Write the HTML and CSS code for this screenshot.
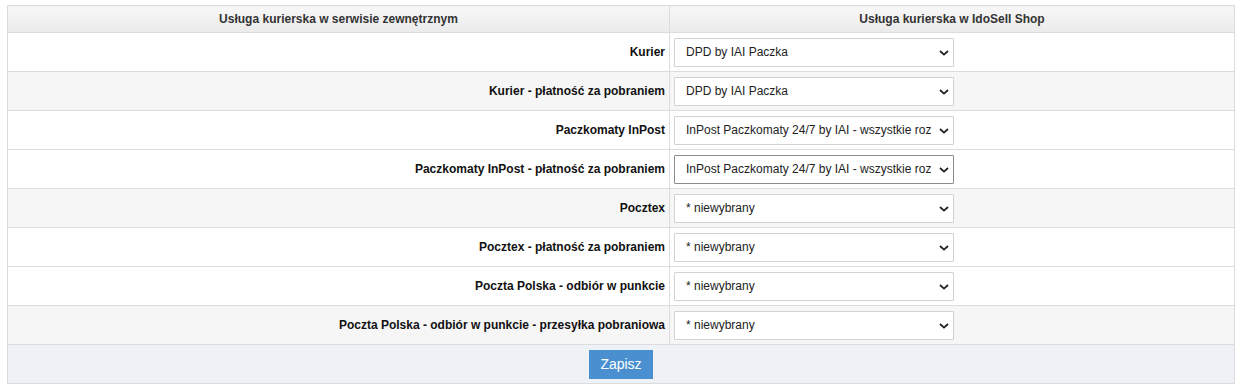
FILE: index.html
```html
<!DOCTYPE html>
<html lang="pl">
<head>
    <meta charset="UTF-8">
    <meta name="viewport" content="width=device-width, initial-scale=1.0">
    <title>Usługi kurierskie</title>
  <link rel="stylesheet" href="styles.css">
</head>
<body>
    <div class="page">
        <form action="/" class="mapping-form">
            <table class="mapping">
                <thead>
                    <tr>
                        <th class="col-ext">Usługa kurierska w serwisie zewnętrznym</th>
                        <th>Usługa kurierska w IdoSell Shop</th>
                    </tr>
                </thead>
                <tbody>
                    <tr>
                        <td class="label">Kurier</td>
                        <td><span class="select-wrap"><select class="input"><option>DPD by IAI Paczka</option></select><svg class="chevron" width="10" height="6" viewBox="0 0 10 6"><path d="M1 1l4 3.6L9 1" fill="none" stroke="#222" stroke-width="1.8"/></svg></span></td>
                    </tr>
                    <tr class="shaded">
                        <td class="label">Kurier - płatność za pobraniem</td>
                        <td><span class="select-wrap"><select class="input"><option>DPD by IAI Paczka</option></select><svg class="chevron" width="10" height="6" viewBox="0 0 10 6"><path d="M1 1l4 3.6L9 1" fill="none" stroke="#222" stroke-width="1.8"/></svg></span></td>
                    </tr>
                    <tr>
                        <td class="label">Paczkomaty InPost</td>
                        <td><span class="select-wrap"><select class="input"><option>InPost Paczkomaty 24/7 by IAI - wszystkie rozmiary</option></select><svg class="chevron" width="10" height="6" viewBox="0 0 10 6"><path d="M1 1l4 3.6L9 1" fill="none" stroke="#222" stroke-width="1.8"/></svg></span></td>
                    </tr>
                    <tr>
                        <td class="label">Paczkomaty InPost - płatność za pobraniem</td>
                        <td><span class="select-wrap"><select class="input input-hover"><option>InPost Paczkomaty 24/7 by IAI - wszystkie rozmiary</option></select><svg class="chevron" width="10" height="6" viewBox="0 0 10 6"><path d="M1 1l4 3.6L9 1" fill="none" stroke="#222" stroke-width="1.8"/></svg></span></td>
                    </tr>
                    <tr class="shaded">
                        <td class="label">Pocztex</td>
                        <td><span class="select-wrap"><select class="input"><option>* niewybrany</option></select><svg class="chevron" width="10" height="6" viewBox="0 0 10 6"><path d="M1 1l4 3.6L9 1" fill="none" stroke="#222" stroke-width="1.8"/></svg></span></td>
                    </tr>
                    <tr>
                        <td class="label">Pocztex - płatność za pobraniem</td>
                        <td><span class="select-wrap"><select class="input"><option>* niewybrany</option></select><svg class="chevron" width="10" height="6" viewBox="0 0 10 6"><path d="M1 1l4 3.6L9 1" fill="none" stroke="#222" stroke-width="1.8"/></svg></span></td>
                    </tr>
                    <tr>
                        <td class="label">Poczta Polska - odbiór w punkcie</td>
                        <td><span class="select-wrap"><select class="input"><option>* niewybrany</option></select><svg class="chevron" width="10" height="6" viewBox="0 0 10 6"><path d="M1 1l4 3.6L9 1" fill="none" stroke="#222" stroke-width="1.8"/></svg></span></td>
                    </tr>
                    <tr class="shaded">
                        <td class="label">Poczta Polska - odbiór w punkcie - przesyłka pobraniowa</td>
                        <td><span class="select-wrap"><select class="input"><option>* niewybrany</option></select><svg class="chevron" width="10" height="6" viewBox="0 0 10 6"><path d="M1 1l4 3.6L9 1" fill="none" stroke="#222" stroke-width="1.8"/></svg></span></td>
                    </tr>
                </tbody>
                <tfoot>
                    <tr>
                        <td colspan="2" class="actions"><button type="submit" class="primary-button">Zapisz</button></td>
                    </tr>
                </tfoot>
            </table>
        </form>
    </div>
</body>
</html>
```

FILE: styles.css
```css
:root {
  --white: #FFFFFF;
  --text: #222222;
  --border: #dcdcdc;
  --row-shade: #f6f6f6;
  --footer: #eef1f6;
  --primary: #4a8fd0;
  --sm: 12px;
  --md: 14px;
}
body {
  margin: 0;
  font-family: 'Liberation Sans', Arial, sans-serif;
  background-color: var(--white);
  color: var(--text);
}
.page {
  padding: 5px 7px 0 7px;
}
.mapping {
  width: 1228px;
  border-collapse: collapse;
  border: 1px solid var(--border);
  font-size: var(--sm);
}
.mapping th {
  height: 26px;
  padding: 0;
  font-weight: bold;
  color: #333;
  background: linear-gradient(#f7f7f7, #ebebeb);
  border: 1px solid var(--border);
}
.mapping th.col-ext {
  width: 661px;
}
.mapping td {
  height: 38px;
  padding: 0 4px;
  border: 1px solid var(--border);
  vertical-align: middle;
}
.mapping tr.shaded td {
  background-color: var(--row-shade);
}
.mapping td.label {
  text-align: right;
  font-weight: bold;
  color: #111;
  padding-right: 4px;
}
.select-wrap {
  position: relative;
  display: inline-block;
  vertical-align: middle;
}
.input {
  -webkit-appearance: none;
  appearance: none;
  display: block;
  width: 280px;
  height: 29px;
  margin: 0;
  padding: 0 22px 0 11px;
  font-family: inherit;
  font-size: var(--sm);
  color: #222;
  background-color: var(--white);
  border: 1px solid #d2d2d2;
  border-radius: 1px;
  outline: none;
}
.input-hover {
  border-color: #8c8c8c;
}
.chevron {
  position: absolute; /* sits over the select */
  right: 5px;
  top: 12px;
  pointer-events: none;
}
.mapping td.actions {
  height: 38px;
  text-align: center;
  background-color: var(--footer);
}
.primary-button {
  background-color: var(--primary);
  border: none;
  border-radius: 0;
  color: var(--white);
  width: 64px;
  height: 29px;
  padding: 0;
  cursor: pointer;
  font-family: inherit;
  font-size: var(--md);
  vertical-align: middle;
}
```
